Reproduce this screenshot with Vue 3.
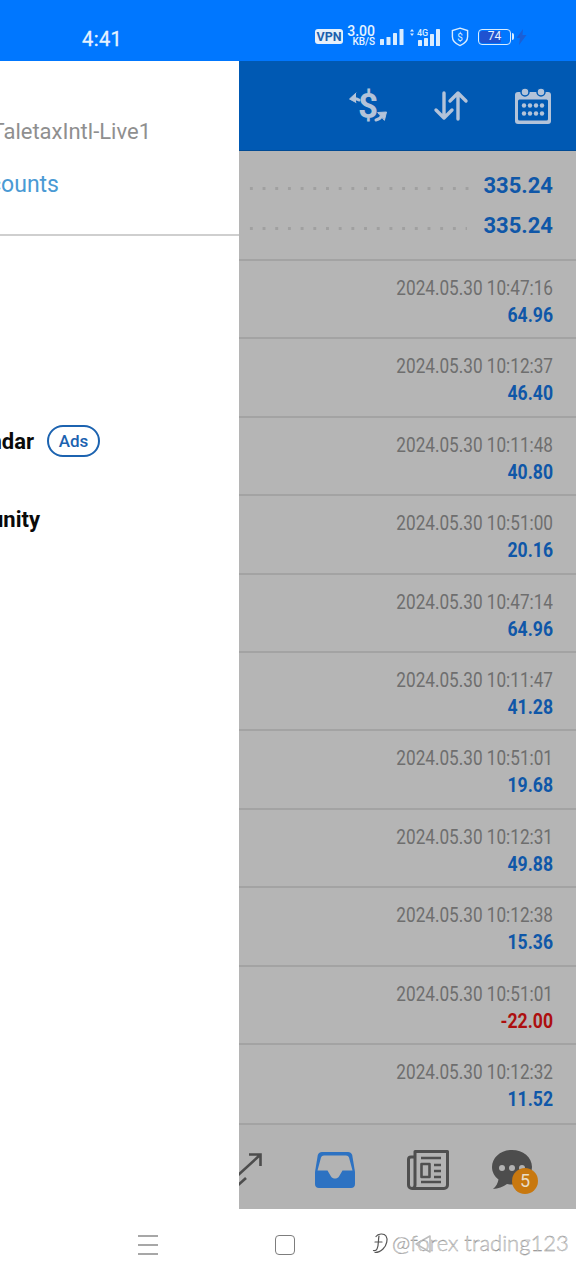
<template>
  <div class="phone">
    <!-- status bar -->
    <div class="status">
      <span class="status__time">4:41</span>
      <div class="status__icons">
        <span class="vpn">VPN</span>
        <span class="speed"><b>3.00</b><i>KB/S</i></span>
        <svg class="bars" width="24" height="16" viewBox="0 0 24 16" fill="#d8ecff">
          <rect x="0" y="10" width="4" height="6" rx=".6"/>
          <rect x="6.500" y="8" width="4" height="8" rx=".6"/>
          <rect x="13" y="4" width="4" height="12" rx=".6"/>
          <rect x="19.500" y="0" width="4" height="16" rx=".6"/>
        </svg>
        <svg class="bars4g" width="32" height="18" viewBox="0 0 32 18" fill="#d8ecff">
          <path d="M2 1 4 3.500H0zM2 8 0 5.500h4z"/>
          <text x="7" y="8" font-size="9" font-family="Roboto, sans-serif" font-weight="500">4G</text>
          <rect x="8" y="12" width="4" height="6" rx=".6"/>
          <rect x="14" y="10" width="4" height="8" rx=".6"/>
          <rect x="20" y="6" width="4" height="12" rx=".6"/>
          <rect x="26" y="1" width="4" height="17" rx=".6"/>
        </svg>
        <svg class="shield" width="18" height="20" viewBox="0 0 18 20" fill="none" stroke="#d8ecff" stroke-width="1.400">
          <path d="M9 1.200 16.600 3.600v6.200c0 4.200-3.200 7-7.600 8.800C4.600 16.800 1.400 14 1.400 9.800V3.600z"/>
          <text x="9" y="13.500" text-anchor="middle" font-size="10" font-family="Roboto, sans-serif" fill="#d8ecff" stroke="none">$</text>
        </svg>
        <span class="battery"><span class="battery__fill"></span><span class="battery__num">74</span></span>
        <svg width="11" height="16" viewBox="0 0 10 16" fill="#1a5fd6"><path d="M6.500 0 0 9h3.500L2.500 16 10 6H6z"/></svg>
      </div>
    </div>

    <div class="screen">
      <!-- side drawer -->
      <aside class="drawer">
        <div class="drawer__head">
          <div class="drawer__server">TaletaxIntl-Live1</div>
          <div class="drawer__accounts">Manage accounts</div>
        </div>
        <div class="drawer__menu">
          <div class="drawer__item drawer__item--calendar">
            <span class="drawer__label">Calendar</span>
            <span class="ads">Ads</span>
          </div>
          <div class="drawer__item drawer__item--community">
            <span class="drawer__label">MQL5 community</span>
          </div>
        </div>
      </aside>

      <!-- dimmed main column -->
      <main class="main">
        <header class="toolbar">
          <svg width="40" height="38" viewBox="0 0 40 38" fill="none" stroke="#b3c3d9" stroke-linecap="round" stroke-linejoin="round">
            <text x="20" y="31" text-anchor="middle" font-size="35" font-weight="700" font-family="Roboto, sans-serif" fill="#b3c3d9" stroke="none">$</text>
            <path d="M11 13C9 12 7 11.500 5 12" stroke-width="3"/>
            <path d="M8 6 1.500 12l6.500 3.500" fill="#b3c3d9" stroke-width="1"/>
            <path d="M28 33c3-.5 5-2.500 6.500-5" stroke-width="3"/>
            <path d="M30 25.500 38.500 25l-2 8z" fill="#b3c3d9" stroke-width="1"/>
          </svg>
          <svg width="38" height="34" viewBox="0 0 38 34" fill="none" stroke="#b3c3d9" stroke-width="3.400" stroke-linecap="round" stroke-linejoin="round">
            <path d="M12 4v25M4 21l8 8 8-8"/>
            <path d="M26 30V4M18 12l8-8 8 8"/>
          </svg>
          <svg width="38" height="38" viewBox="0 0 38 38">
            <rect x="1" y="5" width="36" height="32" rx="3" fill="#b3c3d9"/>
            <rect x="4" y="12.500" width="30" height="21" rx="1.500" fill="#0059b3"/>
            <circle cx="11" cy="5" r="4" fill="#b3c3d9" stroke="#0059b3" stroke-width="1.500"/>
            <circle cx="27" cy="5" r="4" fill="#b3c3d9" stroke="#0059b3" stroke-width="1.500"/>
            <g fill="#b3c3d9">
              <circle v-for="c in calendarDots" :key="c.x + '-' + c.y" :cx="c.x" :cy="c.y" r="2.200"/>
            </g>
          </svg>
        </header>

        <div class="summary">
          <div class="summary__row">
            <span class="summary__dots"></span>
            <span class="summary__val">335.24</span>
          </div>
          <div class="summary__row summary__row--second">
            <span class="summary__dots"></span>
            <span class="summary__val">335.24</span>
          </div>
        </div>

        <div class="list">
          <div v-for="row in rows" :key="row.date + row.value" class="row">
            <div class="row__date">{{ row.date }}</div>
            <div class="row__value" :class="{ 'row__value--neg': row.value.startsWith('-') }">{{ row.value }}</div>
          </div>
        </div>

        <nav class="tabs">
          <svg class="tabs__expand" width="24" height="36" viewBox="0 0 24 36" fill="none" stroke="#4d4d4d" stroke-width="2.600">
            <path d="M-4 26 21 3M10 2.500h11.500V14"/>
            <path d="M-2 34 7 26"/>
          </svg>
          <svg class="tabs__inbox" width="40" height="36" viewBox="0 0 40 36">
            <path d="M7 0h26c2 0 3.500 1 4.200 3L40 20v12c0 2.500-1.500 4-4 4H4c-2.500 0-4-1.500-4-4V20L2.800 3C3.500 1 5 0 7 0z" fill="#2d72c2"/>
            <path d="M9 3.500h22c1.500 0 2.500.7 3 2l3.500 13H27.500l-3.500 6c-1 1.600-2.500 2-4 2s-3-.4-4-2l-3.500-6H2.500L6 5.500c.5-1.300 1.500-2 3-2z" fill="#b3b3b3"/>
          </svg>
          <svg class="tabs__news" width="42" height="40" viewBox="0 0 42 40" fill="none" stroke="#4f4f4f" stroke-width="3" stroke-linejoin="round">
            <path d="M8 7H4C2.500 7 1.500 8 1.500 9.500V35c0 2 1.500 3.500 3.500 3.500h32c2 0 3.500-1.500 3.500-3.500V1.500H8V35c0 2-1.500 3.500-3 3.500"/>
            <path d="M14 8h20" stroke-width="2.500"/>
            <rect x="14.500" y="14" width="8" height="13" stroke-width="2.600"/>
            <path d="M27 15h7M27 21h7M27 27h7M14 32h20" stroke-width="2.500"/>
          </svg>
          <div class="tabs__chat">
            <svg width="40" height="40" viewBox="0 0 40 40">
              <path d="M20 0C9 0 0 7.500 0 17c0 5 2.500 9.500 6.500 12.500C6 33 4 36.500 1 39c5-.5 10-2 14-5 1.500.3 3.500.5 5 .5 11 0 20-7.500 20-17.500S31 0 20 0z" fill="#4d4d4d"/>
              <circle cx="10" cy="18" r="3" fill="#b3b3b3"/>
              <circle cx="20" cy="18" r="3" fill="#b3b3b3"/>
              <circle cx="30" cy="18" r="3" fill="#b3b3b3"/>
            </svg>
            <span class="badge">5</span>
          </div>
        </nav>
      </main>
    </div>

    <!-- system navigation -->
    <div class="sysnav">
      <svg width="22" height="22" viewBox="0 0 22 22" stroke="#8a8a8a" stroke-width="1.600"><path d="M1 2h20M1 11h20M1 20h20"/></svg>
      <span class="sysnav__square"></span>
      <svg class="sysnav__back" width="18" height="20" viewBox="0 0 18 20" fill="none" stroke="#bdbdbd" stroke-width="1.500" stroke-linejoin="round"><path d="M16 2 2 10l14 8z"/></svg>
      <div class="watermark">
        <svg width="18" height="22" viewBox="0 0 18 22" fill="none" stroke="#555" stroke-width="1.200" stroke-linecap="round"><path d="M5 4.500C7 1.500 13 1 15 4s1 9-3 13c-2 2-5 3.500-8 3.500M8 4c-1 4 0 9-2 13-.6 1.200-2 2-3.500 1.500M4 10h7"/></svg>
        <span>@forex trading123</span>
      </div>
    </div>
  </div>
</template>

<script setup>
const rows = [
  { date: '2024.05.30 10:47:16', value: '64.96' },
  { date: '2024.05.30 10:12:37', value: '46.40' },
  { date: '2024.05.30 10:11:48', value: '40.80' },
  { date: '2024.05.30 10:51:00', value: '20.16' },
  { date: '2024.05.30 10:47:14', value: '64.96' },
  { date: '2024.05.30 10:11:47', value: '41.28' },
  { date: '2024.05.30 10:51:01', value: '19.68' },
  { date: '2024.05.30 10:12:31', value: '49.88' },
  { date: '2024.05.30 10:12:38', value: '15.36' },
  { date: '2024.05.30 10:51:01', value: '-22.00' },
  { date: '2024.05.30 10:12:32', value: '11.52' },
]

// grid of dots inside the calendar icon
const calendarDots = []
for (const y of [18.500, 26.500]) {
  for (const x of [10, 16, 22, 28]) calendarDots.push({ x, y })
}
</script>

<style>
html, body { margin: 0; background: #fff; }
</style>

<style scoped>
.phone {
  width: 576px;
  height: 1280px;
  overflow: hidden;
  display: flex;
  flex-direction: column;
  font-family: Roboto, "Liberation Sans", sans-serif;
}
.status {
  height: 61px;
  flex-shrink: 0;
  background: #0077ff;
  color: #e6f3ff;
  display: flex;
  align-items: center;
  padding: 16px 0 0 82px;
  box-sizing: border-box;
}
.status__time {
  font-size: 20px;
  font-weight: 400;
  width: 233px;
  letter-spacing: .4px;
  -webkit-text-stroke: .3px #e6f3ff;
}
.status__icons {
  display: flex;
  align-items: center;
  gap: 5px;
  margin-top: -4px;
}
.vpn {
  background: #e6f0fa;
  color: #1d5fae;
  font-size: 12.500px;
  font-weight: 700;
  border-radius: 3px;
  line-height: 15px;
  width: 28px;
  text-align: center;
}
.speed {
  display: flex;
  flex-direction: column;
  align-items: flex-end;
  width: 27px;
  margin-top: -1px;
}
.speed b { font-size: 14px; line-height: 11px; font-weight: 500; }
.speed i { font-size: 10px; line-height: 9px; font-style: normal; font-weight: 500; }
.bars4g { margin-left: 1px; }
.shield { margin-left: 4px; }
.battery {
  position: relative;
  width: 33px;
  height: 16px;
  border: 1.500px solid #d8ecff;
  border-radius: 4px;
  margin-left: 4px;
  box-sizing: border-box;
  text-align: center;
}
.battery::after {
  content: "";
  position: absolute;
  right: -4px;
  top: 3px;
  width: 2px;
  height: 7px;
  background: #d8ecff;
  border-radius: 0 2px 2px 0;
}
.battery__fill {
  position: absolute;
  left: 1px;
  top: 1px;
  bottom: 1px;
  width: 21px;
  background: #1f52d0;
  border-radius: 2px;
}
.battery__num {
  position: relative;
  font-size: 12px;
  line-height: 13px;
  display: block;
}
.screen {
  height: 1148px;
  display: flex;
  flex-shrink: 0;
}
.drawer {
  width: 239px;
  flex-shrink: 0;
  background: #fff;
  overflow: hidden;
}
.drawer__head {
  height: 175px;
  box-sizing: border-box;
  border-bottom: 2px solid #cfcfcf;
  padding-top: 58px;
  display: flex;
  flex-direction: column;
  align-items: flex-end;
  width: 239px;
}
.drawer__server {
  font-size: 22px;
  color: #8f8f8f;
  line-height: 26px;
  margin-right: 88px;
  white-space: nowrap;
}
.drawer__accounts {
  font-size: 23px;
  color: #4a9ad4;
  line-height: 28px;
  margin-top: 26px;
  margin-right: 180px;
  white-space: nowrap;
}
.drawer__menu {
  position: relative;
  padding-top: 188px;
}
.drawer__item {
  display: flex;
  align-items: center;
  justify-content: flex-end;
  height: 34px;
  font-size: 22px;
  font-weight: 700;
  color: #0a0a0a;
  white-space: nowrap;
}
.drawer__item--calendar {
  margin-right: 205px;
}
.drawer__item--community {
  margin-top: 44px;
  margin-right: 199px;
}
.drawer__label {
  flex-shrink: 0;
}
.ads {
  position: relative;
  margin-left: 13px;
  margin-right: -66px;
  width: 53px;
  height: 32px;
  flex-shrink: 0;
  box-sizing: border-box;
  border: 2px solid #1c63b0;
  border-radius: 16px;
  color: #1c63b0;
  font-size: 17px;
  font-weight: 500;
  line-height: 28px;
  text-align: center;
}
.main {
  flex: 1;
  min-width: 0;
  background: #b5b5b5;
  display: flex;
  flex-direction: column;
}
.toolbar {
  height: 90px;
  flex-shrink: 0;
  background: #0059b3;
  box-sizing: border-box;
  display: flex;
  align-items: center;
  padding: 0 23px 0 109px;
  gap: 44px;
  border-bottom: 1px solid #004a94;
}
.summary {
  height: 108px;
  flex-shrink: 0;
  box-sizing: border-box;
  padding: 14px 23px 0 6px;
}
.summary__row {
  height: 40px;
  display: flex;
  align-items: center;
}
.summary__dots {
  flex: 1;
  height: 3px;
  margin: 6px 13px 0 0;
  background-image: radial-gradient(circle, #a0a0a0 1.400px, transparent 1.700px);
  background-size: 12.700px 3px;
  background-repeat: repeat-x;
}
.summary__row--second .summary__dots {
  margin-right: 17px;
}
.summary__val {
  font-size: 22px;
  font-weight: 700;
  color: #0f57a8;
}
.list {
  flex: 1;
  min-height: 0;
  overflow: hidden;
}
.row {
  height: 78.400px;
  box-sizing: border-box;
  border-top: 2px solid #a3a3a3;
  padding: 14px 23px 0 0;
  text-align: right;
}
.row__date {
  font-size: 20px;
  line-height: 26px;
  margin-bottom: 1px;
  color: #6e6e6e;
  transform: scaleX(.858);
  transform-origin: right center;
  white-space: nowrap;
}
.row__value {
  font-size: 20px;
  line-height: 26px;
  font-weight: 700;
  color: #0f57a8;
  transform: scaleX(.88);
  transform-origin: right center;
}
.row__value--neg {
  color: #ad0f0f;
}
.tabs {
  height: 86px;
  flex-shrink: 0;
  border-top: 2px solid #a3a3a3;
  background: #b3b3b3;
  box-sizing: border-box;
  display: flex;
  align-items: center;
  padding-top: 5px;
}
.tabs__inbox { margin-left: 52px; }
.tabs__news { margin-left: 52px; }
.tabs__chat {
  position: relative;
  margin-left: 43px;
  height: 40px;
}
.badge {
  position: absolute;
  left: 20px;
  top: 18px;
  width: 26px;
  height: 26px;
  border-radius: 50%;
  background: #c8780f;
  color: #e8dcc8;
  font-size: 18px;
  line-height: 26px;
  text-align: center;
}
.sysnav {
  flex: 1;
  background: #fff;
  position: relative;
  display: flex;
  align-items: center;
  padding: 0 0 0 137px;
}
.sysnav__square {
  width: 18px;
  height: 18px;
  border: 1.500px solid #7d7d7d;
  border-radius: 4px;
  margin-left: 116px;
}
.sysnav__back {
  position: absolute;
  left: 414px;
  top: 25px;
}
.watermark {
  position: absolute;
  left: 371px;
  top: 20px;
  display: flex;
  align-items: center;
  gap: 3px;
  font-family: Lato, sans-serif;
  font-size: 22px;
  font-weight: 300;
  color: #f4f4f4;
  white-space: nowrap;
  -webkit-text-stroke: .4px #8c8c8c;
}
</style>
